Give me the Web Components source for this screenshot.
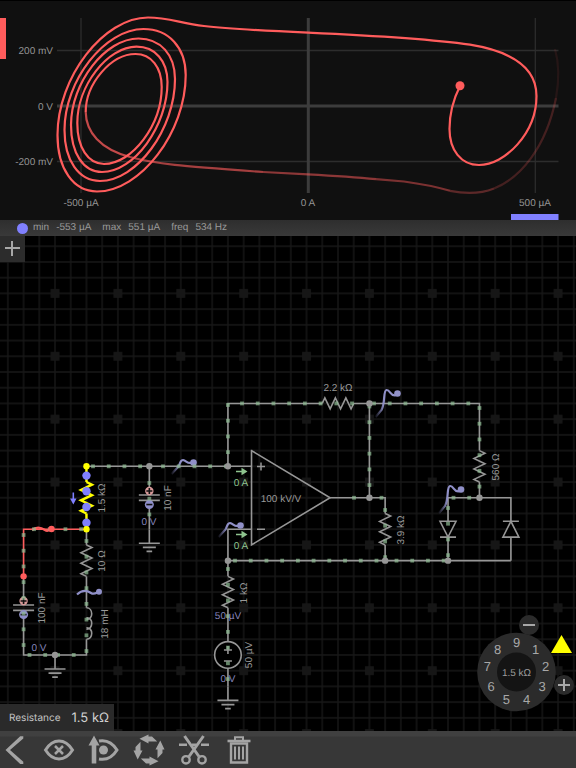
<!DOCTYPE html>
<html lang="en">
<head>
<meta charset="utf-8">
<meta name="viewport" content="width=device-width, initial-scale=1">
<title>Circuit simulator</title>
<style>
  html, body {
    height: 100%;
    margin: 0;
    background: #000;
  }
  body {
    font-family: "Liberation Sans", Arial, sans-serif;
    font-size: 10px;
    color: #999;
    text-rendering: geometricPrecision;
  }
</style>
</head>
<body>
<circuit-app></circuit-app>

<script>
// ---------- scope ----------

// Arc between a horizontal and a vertical tangent point. k is the handle length.
function arc(from, to, startsFlat, k) {
  const dx = (to[0] - from[0]) * k;
  const dy = (to[1] - from[1]) * k;
  return startsFlat
    ? `C${from[0] + dx} ${from[1]} ${to[0]} ${to[1] - dy} ${to[0]} ${to[1]}`
    : `C${from[0]} ${from[1] + dy} ${to[0] - dx} ${to[1]} ${to[0]} ${to[1]}`;
}

// the ellipses lean, so arcs that start flat are the long ones
function spiralPath(points) {
  let d = '';
  for (let i = 1; i < points.length; i++) {
    const flat = i % 2 === 1;
    d += arc(points[i - 1], points[i], flat, flat ? 0.49 : 0.6);
  }
  return d;
}

// top, left, bottom, right extremes of each turn
const SPIRAL = [
  [148, 17.5], [57.5, 135], [97, 191.5], [185.7, 75],
  [143.5, 29], [64.5, 130], [100, 181], [175, 79],
  [138.5, 38.5], [71, 125], [102, 172], [167.5, 82],
  [136.5, 46.7], [77.3, 123], [104, 164], [161.7, 87],
  [135.5, 54], [85.7, 112]
];

class ScopePlot extends HTMLElement {
  connectedCallback() {
    this.attachShadow({ mode: 'open' });
    this.shadowRoot.innerHTML = `
      <style>
        :host { display: block; background: #101010; border-top: 1px solid #000; }
        svg { display: block; width: 100%; height: auto; }
        text { font-size: 10px; fill: #949494; }
        .grid { stroke: #2d2d2d; stroke-width: 1.3; }
        .zero { stroke: #3c3c3c; stroke-width: 3; }
        .trace { fill: none; stroke: #ff5c5c; stroke-width: 2.2; }
      </style>
      <svg viewBox="0 1 576 219">
        <path class="grid" d="M57 50.5H558.5M57 161.5H558.5M81 18V193M535.3 18V193"/>
        <path class="zero" d="M57 106H558.5M308.3 18V193"/>
        <g text-anchor="end">
          <text x="53" y="54">200 mV</text>
          <text x="53" y="110">0 V</text>
          <text x="53" y="165">-200 mV</text>
        </g>
        <g text-anchor="middle">
          <text x="81" y="206">-500 µA</text>
          <text x="308" y="206">0 A</text>
          <text x="535" y="206">500 µA</text>
        </g>
        <rect y="18" width="6" height="41" fill="#ff5c5c"/>
        <rect x="511" y="214" width="47.500" height="6" fill="#8080ff"/>
        <path class="trace" d="M460 86C453 100 449.500 113 449.500 129C449.500 150 461 165 479 165C505 165 536.500 133 536.500 96C536.500 70 515 52 470 44.700C430 39 370 35.500 308 32.700C270 31 225 28.500 204 26C180 23 168 17.500 148 17.500${spiralPath(SPIRAL)}"/>
        <path class="trace" opacity=".75" d="M85.700 112C86 132 100 149 130 157"/>
        <path class="trace" opacity=".62" d="M130 157C155 164 180 166 263 172"/>
        <path class="trace" opacity=".52" d="M263 172L308 174.300Q350 176.500 376 179.200"/>
        <path class="trace" opacity=".45" d="M376 179.200L404 181.500Q430 185 450 190.800"/>
        <path class="trace" opacity=".32" d="M450 190.800Q475 196 494 188.500"/>
        <path class="trace" opacity=".22" d="M494 188.500C520 178 546 148 556 98"/>
        <path class="trace" opacity=".09" d="M556 98Q561 70 555 49"/>
        <circle cx="460" cy="85.800" r="4.500" fill="#ff5c5c"/>
      </svg>
    `;
  }
}

class StatBar extends HTMLElement {
  connectedCallback() {
    this.attachShadow({ mode: 'open' });
    this.shadowRoot.innerHTML = `
      <style>
        :host {
          display: flex;
          align-items: center;
          height: 16px;
          padding-left: 17px;
          background: linear-gradient(#2e2e2e, #393939);
        }
        .dot {
          width: 11px;
          height: 11px;
          margin-right: 5px;
          border-radius: 50%;
          background: #8080ff;
        }
        dl { display: flex; gap: 11px; margin: 0; line-height: 18px; }
        dl div { display: flex; gap: 7px; }
        dd { margin: 0; }
      </style>
      <span class="dot"></span>
      <dl>
        <div><dt>min</dt><dd>-553 µA</dd></div>
        <div><dt>max</dt><dd>551 µA</dd></div>
        <div><dt>freq</dt><dd>534 Hz</dd></div>
      </dl>
    `;
  }
}

// ---------- circuit ----------

// grid cell size and origin, in canvas pixels
const CELL = 15.72;
const X = c => 7.86 + c * CELL;
const Y = r => 10.24 + r * CELL;

const wire = (...pts) =>
  `<polyline points="${pts.map(([c, r]) => `${X(c)},${Y(r)}`).join(' ')}"/>`;

const node = (c, r, cls = 'node') => `<circle class="${cls}" cx="${X(c)}" cy="${Y(r)}" r="3.2"/>`;

const resistor = (c, r, angle = 90, cls = '') =>
  `<path class="${cls}" transform="translate(${X(c)} ${Y(r)}) rotate(${angle})"
    d="M0 0L2.6-5.500 7.900 5.500 13.100-5.500 18.300 5.500 23.600-5.500 28.800 5.500 31.440 0"/>`;

const inductor = (c, r) =>
  `<path transform="translate(${X(c)} ${Y(r)})"
    d="M0 0C7 0 7 12 0 11.500M0 10C7 9 7 22 0 21.500M0 20C7 19.500 7 31.440 0 31.440"/>`;

const ground = (c, r) =>
  `<path transform="translate(${X(c)} ${Y(r)})" d="M0 0V14M-10.500 14H10.500M-6.500 18.200H6.500M-2.800 22.200H2.800"/>`;

const capacitor = (c, r) => `
  <g transform="translate(${X(c)} ${Y(r)})">
    <path d="M-10.500-2.800H10.500M-10.500 2.600H10.500"/>
    <circle cy="-6.800" r="4.200" fill="#d89a9a" stroke="none"/>
    <path d="M-3-6.800H3M0-9.800V-3.800" stroke="#111"/>
    <circle cy="6.800" r="4.500" fill="#8f8fca" stroke="none"/>
    <path d="M-3 6.800H3" stroke="#111"/>
  </g>`;

const diode = (c, r, angle) =>
  `<path class="solid" transform="translate(${X(c)} ${Y(r)}) rotate(${angle})" d="M-8-7.900H8L0 7.900ZM-8 7.900H8"/>`;

// moving charge markers: n squares, one cell apart
function charges(x, y, n, vertical) {
  let out = '';
  for (let i = 0; i < n; i++) {
    const px = vertical ? x : x + i * CELL;
    const py = vertical ? y + i * CELL : y;
    out += `<rect x="${px - 1.9}" y="${py - 1.9}" width="3.8" height="3.8"/>`;
  }
  return out;
}

const probe = (x, y, tall) => `
  <g transform="translate(${x} ${y})">
    <path stroke="url(#tail)" stroke-width="2.200" d="${tall
      ? 'M-22 23.500L-16 16.500C-12 9-14.500-3-11-3.500C-7-4-7 4-1 1.500'
      : 'M-22 11.500L-15 4C-13-1-12.500-2.500-10.500-2.500C-7-2-6 2-1 0'}"/>
    <circle r="3.300" fill="#9090c8" stroke="none"/>
  </g>`;

const label = (x, y, str, cls = '') => `<text class="${cls}" x="${x}" y="${y}">${str}</text>`;
const sideLabel = (x, y, str) =>
  `<text x="${x}" y="${y}" transform="rotate(-90 ${x} ${y})">${str}</text>`;

class CircuitCanvas extends HTMLElement {
  connectedCallback() {
    this.attachShadow({ mode: 'open' });
    this.shadowRoot.innerHTML = `
      <style>
        :host { display: block; position: relative; overflow: hidden; background: #000; }
        svg { position: absolute; inset: 0; width: 100%; height: 100%; }
        polyline, path { fill: none; }
        .parts { stroke: #969696; stroke-width: 1.6; }
        .parts .solid { fill: #000; }
        .parts .red { stroke: #ff5c5c; }
        .parts .yellow { stroke: #ff0; stroke-width: 2.4; }
        .node { fill: #969696; stroke: none; }
        .hot { fill: #ff5c5c; stroke: none; }
        .selected { fill: #ff0; stroke: none; }
        .charges { fill: #8fbc94; opacity: .7; }
        .balls { fill: #8080ff; }
        .arrow { fill: #8fc48f; }
        .flow { fill: #8080ff; }
        text { font-size: 10px; fill: #999; text-anchor: middle; }
        .volt { fill: #8585bb; }
        .amp { fill: #8fc48f; }
      </style>
      <svg>
        <defs>
          <pattern id="lines" x="${X(0)}" y="${Y(0)}" width="${CELL}" height="${CELL}" patternUnits="userSpaceOnUse">
            <path d="M0 0V${CELL}M${CELL} 0V${CELL}M0 0H${CELL}M0 ${CELL}H${CELL}" stroke="#171717" stroke-width="1.400"/>
          </pattern>
          <pattern id="marks" x="${X(1)}" y="${Y(1)}" width="${CELL * 4}" height="${CELL * 4}" patternUnits="userSpaceOnUse">
            <rect x="${CELL * 2 - 4.4}" y="${CELL * 2 - 4.4}" width="8.800" height="8.800" fill="#161616"/>
          </pattern>
          <linearGradient id="tail">
            <stop offset="0" stop-color="#9090c8" stop-opacity=".1"/>
            <stop offset=".4" stop-color="#9090c8"/>
          </linearGradient>
        </defs>
        <rect width="100%" height="100%" fill="url(#lines)"/>
        <rect width="100%" height="100%" fill="url(#marks)"/>

        <g class="parts">
          ${wire([5, 14], [15.5, 14])}
          ${wire([14, 14], [14, 10], [20, 10])}
          ${resistor(20, 10, 0)}
          ${wire([22, 10], [30, 10], [30, 13])}
          ${resistor(30, 13)}
          ${wire([30, 15], [30, 16])}
          ${wire([28, 20], [28, 16], [32, 16], [32, 20])}
          ${diode(28, 18, 0)}
          ${diode(32, 18, 180)}
          ${wire([23, 10], [23, 16])}
          ${wire([20.5, 16], [24, 16], [24, 17])}
          ${resistor(24, 17)}
          ${wire([24, 19], [24, 20])}
          ${wire([32, 20], [14, 20], [14, 18], [15.5, 18])}
          ${wire([15.5, 13], [20.5, 16], [15.5, 19], [15.5, 12.95])}
          ${wire([14, 20], [14, 21])}
          ${resistor(14, 21)}
          ${wire([14, 23], [14, 28])}
          <circle cx="${X(14)}" cy="${Y(26)}" r="13.300" fill="#000"/>
          <path d="M${X(14)} ${Y(26) - 9}v8m-4-4h8M${X(14) - 4} ${Y(26) + 6}h8"/>
          ${ground(14, 28)}

          ${wire([9, 14], [9, 15.8])}
          ${wire([9, 16.2], [9, 18])}
          ${capacitor(9, 16)}
          ${ground(9, 18)}

          ${wire([5, 18], [5, 19])}
          ${resistor(5, 19)}
          ${wire([5, 21], [5, 23])}
          ${inductor(5, 23)}
          ${wire([5, 25], [5, 26], [1, 26], [1, 23.2])}
          ${wire([1, 21], [1, 22.8])}
          ${capacitor(1, 23)}
          ${ground(3, 26)}
          <polyline class="red" points="${X(5)},${Y(18)} ${X(1)},${Y(18)} ${X(1)},${Y(21)}"/>
          <path class="red" stroke-width="2.400" d="M32 294C37 290 42 292 45 294S49 294 51 293"/>
          <polyline class="yellow" points="${X(5)},${Y(14)} ${X(5)},${Y(15)}"/>
          ${resistor(5, 15, 90, 'yellow')}
          <polyline class="yellow" points="${X(5)},${Y(17)} ${X(5)},${Y(18)}"/>

          ${probe(193.5, 226.5)}
          ${probe(240.5, 289.5)}
          ${probe(397.5, 157.5, true)}
          ${probe(461, 253.5, true)}
          <path stroke="#9090c8" stroke-width="2.200" d="M77 358.500C83 353 88 355 91 357S96 357 99 356"/>
          <circle cx="99" cy="355.700" r="3" fill="#9090c8" stroke="none"/>
        </g>

        <g class="charges">
          ${charges(93, Y(14), 4)}
          ${charges(163, Y(14), 5)}
          ${charges(X(14), 169, 4, true)}
          ${charges(242, Y(10), 8)}
          ${charges(374, Y(10), 7)}
          ${charges(X(23), 170.5, 6, true)}
          ${charges(X(30), 172, 6, true)}
          ${charges(354, Y(16), 1)}
          ${charges(381.5, Y(16), 1)}
          ${charges(X(24), 274, 4, true)}
          ${charges(453.5, Y(16), 2)}
          ${charges(X(28), 272, 4, true)}
          ${charges(235, Y(20), 10)}
          ${charges(396.5, Y(20), 4)}
          ${charges(X(14), 333, 8, true)}
          ${charges(X(9), 247, 3, true)}
          ${charges(34, Y(18), 4)}
          ${charges(X(1), 299, 8, true)}
          ${charges(X(5), 305, 8, true)}
          ${charges(29.5, Y(26), 2)}
          ${charges(58, Y(26), 2)}
        </g>

        ${node(9, 14)}${node(14, 14)}${node(23, 10)}${node(23, 16)}${node(30, 16)}
        ${node(24, 20)}${node(28, 20)}${node(14, 20)}${node(3, 26)}
        ${node(1, 21, 'hot')}
        <circle class="hot" cx="51.500" cy="293" r="3.200"/>
        <g class="balls">
          <circle cx="${X(5)}" cy="239.600" r="4.200"/>
          <circle cx="${X(5)}" cy="255.300" r="4.200"/>
          <circle cx="${X(5)}" cy="271" r="4.200"/>
          <circle cx="${X(5)}" cy="286.700" r="4.200"/>
        </g>
        <path class="flow" d="M72.500 256.500h1.600v6h2.400l-3.200 6-3.200-6h2.400z"/>
        ${node(5, 14, 'selected')}${node(5, 18, 'selected')}

        <path class="arrow" d="M236 234.700h5.500v-3l6 3.800-6 3.800v-3h-5.500z"/>
        <path class="arrow" d="M236 297.700h5.500v-3l6 3.800-6 3.800v-3h-5.500z"/>
        <path stroke="#969696" stroke-width="1.500" d="M257 230.500h8m-4-4v8M257 293.300h8"/>

        ${label(338, 155, '2.2 kΩ')}
        ${label(281, 266, '100 kV/V')}
        ${sideLabel(105, 262, '1.5 kΩ')}
        ${sideLabel(105, 325, '10 Ω')}
        ${sideLabel(108, 388, '18 mH')}
        ${sideLabel(45, 372, '100 nF')}
        ${sideLabel(171, 262, '10 nF')}
        ${sideLabel(404, 294, '3.9 kΩ')}
        ${sideLabel(499, 231, '560 Ω')}
        ${sideLabel(247, 357, '1 kΩ')}
        ${sideLabel(252, 419, '50 µV')}
        ${label(39, 415, '0 V', 'volt')}
        ${label(149, 289, '0 V', 'volt')}
        ${label(228, 383, '50 µV', 'volt')}
        ${label(228, 446, '0 V', 'volt')}
        ${label(241, 250, '0 A', 'amp')}
        ${label(241, 313, '0 A', 'amp')}
      </svg>
      <slot></slot>
    `;
  }
}

class AddButton extends HTMLElement {
  connectedCallback() {
    this.attachShadow({ mode: 'open' });
    this.shadowRoot.innerHTML = `
      <style>
        :host { position: absolute; top: 0; left: 0; }
        button { display: block; width: 25px; height: 26px; padding: 0; border: 0; background: #2c2c2c; }
        svg { display: block; }
      </style>
      <button aria-label="Add component">
        <svg width="25" height="26"><path d="M5 12h15M12 5v15" stroke="#a8a8a8" stroke-width="2"/></svg>
      </button>
    `;
  }
}

class ValueReadout extends HTMLElement {
  connectedCallback() {
    this.attachShadow({ mode: 'open' });
    this.shadowRoot.innerHTML = `
      <style>
        :host {
          position: absolute;
          left: 0;
          bottom: 0;
          display: flex;
          align-items: center;
          gap: 11px;
          height: 27px;
          padding: 0 5px 0 9px;
          background: #2a2a2a;
          color: #c4c4c4;
          font-family: Inter, Roboto, sans-serif;
          font-size: 10px;
        }
        .value { font-size: 13px; color: #d0d0d0; }
      </style>
      <span><slot></slot></span>
      <span class="value"><slot name="value"></slot></span>
    `;
  }
}

class ValueDial extends HTMLElement {
  connectedCallback() {
    const digits = [9, 1, 2, 3, 4, 5, 6, 7, 8].map((n, i) => {
      const a = i * Math.PI * 2 / 9;
      const x = 40.5 + Math.sin(a) * 29.5;
      const y = 59 - Math.cos(a) * 29.5 + 4.5;
      return `<text class="digit" x="${x.toFixed(1)}" y="${y.toFixed(1)}">${n}</text>`;
    }).join('');

    this.attachShadow({ mode: 'open' });
    this.shadowRoot.innerHTML = `
      <style>
        :host { position: absolute; right: 0; bottom: 18px; width: 100px; height: 100px; }
        svg { display: block; overflow: visible; }
        text { font-size: 10px; fill: #9c9c9c; text-anchor: middle; }
        .digit { font-size: 13px; fill: #a8a8a8; }
        button {
          position: absolute;
          width: 20px;
          height: 20px;
          padding: 0;
          border: 0;
          border-radius: 50%;
          background: #2b2b2b;
        }
        .minus { left: 43px; top: 2px; }
        .plus { left: 78px; top: 62px; }
        .warp {
          left: 75px;
          top: 22px;
          width: 21px;
          height: 18px;
          border-radius: 0;
          background: #ff0;
          clip-path: polygon(50% 0, 100% 100%, 0 100%);
        }
      </style>
      <svg width="100" height="100">
        <circle cx="40.500" cy="59" r="39.300" fill="#2b2b2b"/>
        <circle cx="40.500" cy="59" r="19.500" fill="#141414"/>
        ${digits}
        <text x="40.500" y="63">1.5 kΩ</text>
      </svg>
      <button class="minus" aria-label="Decrease">
        <svg width="20" height="20"><path d="M4 10h12" stroke="#a8a8a8" stroke-width="2"/></svg>
      </button>
      <button class="plus" aria-label="Increase">
        <svg width="20" height="20"><path d="M4 10h12M10 4v12" stroke="#a8a8a8" stroke-width="2"/></svg>
      </button>
      <button class="warp" aria-label="Next decade"></button>
    `;
  }
}

// ---------- toolbar ----------

const ARROW = 'M11.300-9.500L15.500-.500H13.500V3L8.500 8.200V-.500H6.500Z';

// all icons are centred on 0,0
const ICONS = {
  back: `<path class="fill" d="M9.300-13.800H6.200L-8.500 0 6.200 14H9.300V11.800L-4 0 9.300-11.600Z"/>`,
  hide: `<path d="M-13.500 0C-6-12 6-12 13.500 0C6 12-6 12-13.500 0Z" stroke-width="3"/>
    <path d="M-4-4L4 4M4-4L-4 4" stroke-width="2.500"/>`,
  watch: `<path class="fill" d="M-10-14.500L-4.500-4.500H-7.700V13.500H-12.300V-4.500H-15.500Z"/>
    <path d="M-5-9C3-10.500 9-6.500 13 0C9 6.500 3 10.500-5 9" stroke-width="3"/>
    <circle class="fill" cx="-.5" r="4.500"/>`,
  rotate: [0, 90, 180, 270].map(a => `<path class="fill" transform="rotate(${a})" d="${ARROW}"/>`).join(''),
  cut: `<path d="M-15-5.200H-7M-2-5.200H2.500M7-5.200H15" stroke-width="2.400"/>
    <path d="M-9.500-14L5 6.500M9.500-14L-5 6.500" stroke-width="3"/>
    <circle cx="-8" cy="9.800" r="3.700" stroke-width="2.400"/><circle cx="8" cy="9.800" r="3.700" stroke-width="2.400"/>`,
  trash: `<path d="M-11.500-9H11.500" stroke-width="2.600"/>
    <path d="M-4-9.500V-12.800H4V-9.500" stroke-width="2"/>
    <path d="M-8-6.500V12.500H8V-6.500Z" stroke-width="2.400"/>
    <path d="M-4-3.500V9.500M0-3.500V9.500M4-3.500V9.500" stroke-width="2"/>`
};

class ToolButton extends HTMLElement {
  connectedCallback() {
    this.attachShadow({ mode: 'open' });
    this.shadowRoot.innerHTML = `
      <style>
        :host { display: block; }
        button { display: block; padding: 0; border: 0; background: none; cursor: pointer; }
        svg { display: block; overflow: visible; }
        path, circle { fill: none; stroke: #a4a4a4; }
        .fill { fill: #a4a4a4; stroke: none; }
      </style>
      <button aria-label="${this.getAttribute('name')}">
        <svg width="28" height="28" viewBox="-14 -14 28 28">${ICONS[this.getAttribute('icon')]}</svg>
      </button>
    `;
  }
}

class ToolBar extends HTMLElement {
  connectedCallback() {
    this.attachShadow({ mode: 'open' });
    this.shadowRoot.innerHTML = `
      <style>
        :host {
          display: flex;
          align-items: center;
          gap: 17px;
          height: 37px;
          background: linear-gradient(#404040, #404040 5px, #373737 6px, #373737);
        }
      </style>
      <slot></slot>
    `;
  }
}

class CircuitApp extends HTMLElement {
  connectedCallback() {
    this.attachShadow({ mode: 'open' });
    this.shadowRoot.innerHTML = `
      <style>
        :host { display: flex; flex-direction: column; height: 100%; }
        circuit-canvas { flex: 1; min-height: 0; }
      </style>
      <scope-plot></scope-plot>
      <stat-bar></stat-bar>
      <circuit-canvas>
        <add-button></add-button>
        <value-readout>Resistance<span slot="value">1.5 kΩ</span></value-readout>
        <value-dial></value-dial>
      </circuit-canvas>
      <tool-bar>
        <tool-button icon="back" name="Back"></tool-button>
        <tool-button icon="hide" name="Remove from scope"></tool-button>
        <tool-button icon="watch" name="Add to scope"></tool-button>
        <tool-button icon="rotate" name="Rotate"></tool-button>
        <tool-button icon="cut" name="Cut wire"></tool-button>
        <tool-button icon="trash" name="Delete"></tool-button>
      </tool-bar>
    `;
  }
}

customElements.define('scope-plot', ScopePlot);
customElements.define('stat-bar', StatBar);
customElements.define('circuit-canvas', CircuitCanvas);
customElements.define('add-button', AddButton);
customElements.define('value-readout', ValueReadout);
customElements.define('value-dial', ValueDial);
customElements.define('tool-button', ToolButton);
customElements.define('tool-bar', ToolBar);
customElements.define('circuit-app', CircuitApp);
</script>
</body>
</html>
